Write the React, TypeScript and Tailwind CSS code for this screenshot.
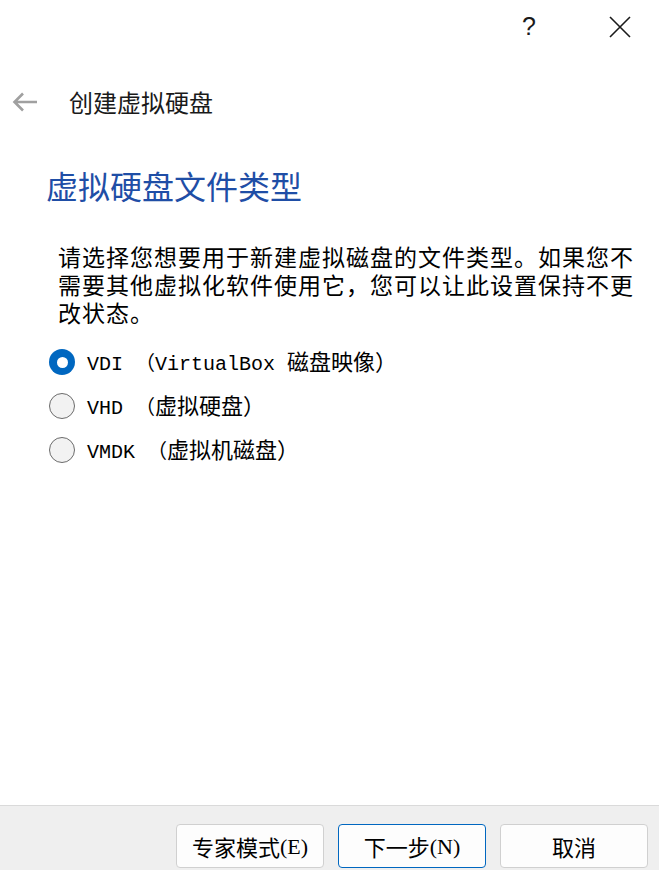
import React from 'react';

const cjk = '"Noto Sans CJK SC", "Noto Sans", sans-serif';

const options = [
  { id: 'vdi', latin: 'VDI （VirtualBox ', cjk: '磁盘映像）' },
  { id: 'vhd', latin: 'VHD （', cjk: '虚拟硬盘）' },
  { id: 'vmdk', latin: 'VMDK （', cjk: '虚拟机磁盘）' },
];

const Radio = ({ checked }: { checked: boolean }) =>
  checked ? (
    <span className="flex h-[26px] w-[26px] items-center justify-center rounded-full bg-[#0067c0]">
      <span className="h-[11px] w-[11px] rounded-full bg-white" />
    </span>
  ) : (
    <span className="h-[26px] w-[26px] rounded-full border-[1.5px] border-[#6b6b6b] bg-[#f2f2f2]" />
  );

const App = () => {
  const [selected, setSelected] = React.useState('vdi');

  return (
    <div className="flex h-[870px] w-[659px] flex-col bg-white text-black" style={{ fontFamily: cjk }}>
      {/* title bar */}
      <div className="flex h-[54px] items-center justify-end pr-[16px]">
        <button className="flex h-[46px] w-[46px] items-center justify-center text-[25px] text-[#1a1a1a]" style={{ fontFamily: '"Liberation Sans", sans-serif' }}>
          ?
        </button>
        <button className="ml-[45px] flex h-[46px] w-[46px] items-center justify-center">
          <svg width="22" height="22" viewBox="0 0 22 22" fill="none" stroke="#1a1a1a" strokeWidth="1.6">
            <path d="M1 1L21 21M21 1L1 21" />
          </svg>
        </button>
      </div>

      {/* header */}
      <div className="mt-[28px] flex h-[40px] items-center">
        <button className="ml-[10px] flex h-[30px] w-[30px] items-center justify-center">
          <svg width="26" height="20" viewBox="0 0 26 20" fill="none" stroke="#a0a0a0" strokeWidth="2.6">
            <path d="M25 10H2.5M11 1.5L2.5 10l8.5 8.5" />
          </svg>
        </button>
        <span className="ml-[29px] text-[24px] leading-[40px] text-[#1a1a1a]">创建虚拟硬盘</span>
      </div>

      {/* page title */}
      <h1 className="ml-[46px] mt-[43px] text-[32px] font-normal leading-[40px] text-[#1f4ea6]">虚拟硬盘文件类型</h1>

      <p className="ml-[58px] mt-[37px] text-[23px] leading-[28px] tracking-[1px]">
        请选择您想要用于新建虚拟磁盘的文件类型。如果您不
        <br />
        需要其他虚拟化软件使用它，您可以让此设置保持不更
        <br />
        改状态。
      </p>

      <div className="ml-[49px] mt-[14px] flex flex-col">
        {options.map((o) => (
          <label key={o.id} className="flex h-[44px] cursor-pointer items-center gap-[12px]" onClick={() => setSelected(o.id)}>
            <Radio checked={selected === o.id} />
            <span className="text-[20px] whitespace-pre" style={{ fontFamily: '"Liberation Mono", "Noto Sans CJK SC", monospace' }}>
              {o.latin}
              <span className="text-[22px]" style={{ fontFamily: cjk }}>{o.cjk}</span>
            </span>
          </label>
        ))}
      </div>

      {/* footer */}
      <div className="mt-auto flex h-[65px] items-start justify-end gap-[14px] border-t border-[#dadada] bg-[#efefef] pr-[11px] pt-[18px]">
        {[
          { label: '专家模式', key: 'E', primary: false },
          { label: '下一步', key: 'N', primary: true },
          { label: '取消', key: '', primary: false },
        ].map((b) => (
          <button
            key={b.label}
            className={`flex h-[44px] w-[148px] items-center justify-center rounded-[4px] border bg-[#fdfdfd] text-[22px] text-black ${
              b.primary ? 'border-[#0067c0]' : 'border-[#d0d0d0]'
            }`}
          >
            {b.label}
            {b.key && <span style={{ fontFamily: '"Liberation Serif", serif' }}>({b.key})</span>}
          </button>
        ))}
      </div>
    </div>
  );
};

export default App;
